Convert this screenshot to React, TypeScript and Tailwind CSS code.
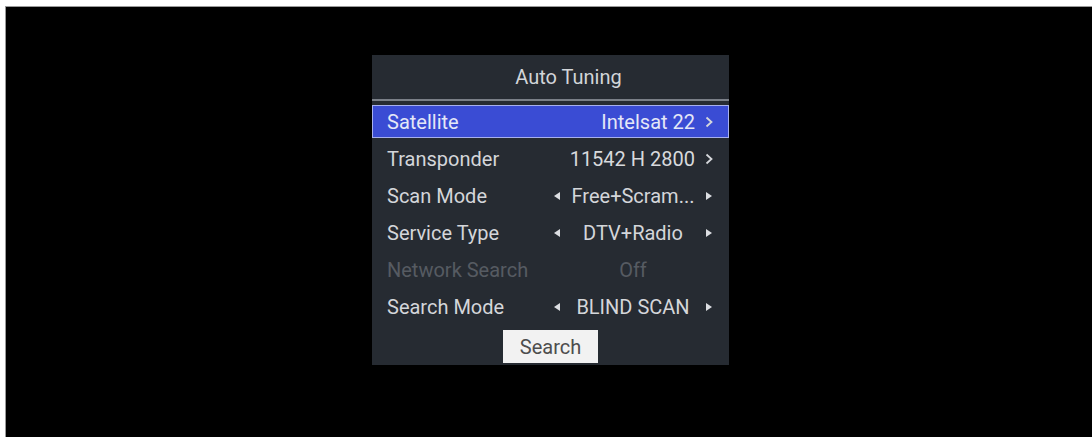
import React from "react";

const font = { fontFamily: "Roboto, 'Liberation Sans', sans-serif" };

function TriLeft({ dim }: { dim?: boolean }) {
  return (
    <svg width="6" height="8" viewBox="0 0 6 8" className={dim ? "opacity-0" : ""}>
      <polygon points="6,0 0,4 6,8" fill="#dcdee2" />
    </svg>
  );
}
function TriRight({ dim }: { dim?: boolean }) {
  return (
    <svg width="6" height="8" viewBox="0 0 6 8" className={dim ? "opacity-0" : ""}>
      <polygon points="0,0 6,4 0,8" fill="#dcdee2" />
    </svg>
  );
}
function Chevron() {
  return (
    <svg width="8" height="12" viewBox="0 0 8 12">
      <polyline points="1.5,1.5 6.5,6 1.5,10.5" fill="none" stroke="#d6d8dc" strokeWidth="1.8" />
    </svg>
  );
}

function ArrowRow({ label, value, selected }: { label: string; value: string; selected?: boolean }) {
  if (selected) {
    return (
      <div className="h-[37px] flex flex-col justify-center">
        <div className="h-[33px] border border-[#a7b0ee] bg-[#3a4cd4] flex items-center">
          <div className="flex-1 pl-[14px] text-[#e4e7f7]">{label}</div>
          <div className="flex items-center gap-[10px] pr-[15px] text-[#e4e7f7]">
            <span>{value}</span>
            <Chevron />
          </div>
        </div>
      </div>
    );
  }
  return (
    <div className="h-[37px] flex items-center">
      <div className="flex-1 pl-[15px] text-[#d4d6da]">{label}</div>
      <div className="flex items-center gap-[10px] pr-[16px] text-[#d8dadd]">
        <span>{value}</span>
        <Chevron />
      </div>
    </div>
  );
}

function ToggleRow({ label, value, disabled }: { label: string; value: string; disabled?: boolean }) {
  const color = disabled ? "text-[#565b62]" : "text-[#d4d6da]";
  return (
    <div className="h-[37px] flex items-center">
      <div className={`flex-1 pl-[15px] ${color}`}>{label}</div>
      <div className={`w-[158px] mr-[17px] flex items-center ${color}`}>
        <TriLeft dim={disabled} />
        <span className="flex-1 text-center whitespace-nowrap">{value}</span>
        <TriRight dim={disabled} />
      </div>
    </div>
  );
}

export default function App() {
  return (
    <div className="w-[1092px] h-[437px] bg-white pt-[6px] pl-[5px] overflow-hidden" style={font}>
      <div className="h-full bg-black border-t border-l border-[#9a9a9a] pt-[48px] pl-[366px]">
        <div className="w-[357px] bg-[#262b32] flex flex-col text-[20px] leading-none pb-[2px]">
          <div className="h-[44px] flex items-center justify-center pl-[36px] text-[#d2d5d9]">
            Auto Tuning
          </div>
          <div className="h-[2px] bg-[#7a7f87]" />
          <div className="h-[2px]" />
          <ArrowRow label="Satellite" value="Intelsat 22" selected />
          <ArrowRow label="Transponder" value="11542 H 2800" />
          <ToggleRow label="Scan Mode" value="Free+Scram..." />
          <ToggleRow label="Service Type" value="DTV+Radio" />
          <ToggleRow label="Network Search" value="Off" disabled />
          <ToggleRow label="Search Mode" value="BLIND SCAN" />
          <div className="mt-[5px] self-center w-[95px] h-[33px] bg-[#f2f2f2] text-[#4d4d4d] flex items-center justify-center">
            Search
          </div>
        </div>
      </div>
    </div>
  );
}
